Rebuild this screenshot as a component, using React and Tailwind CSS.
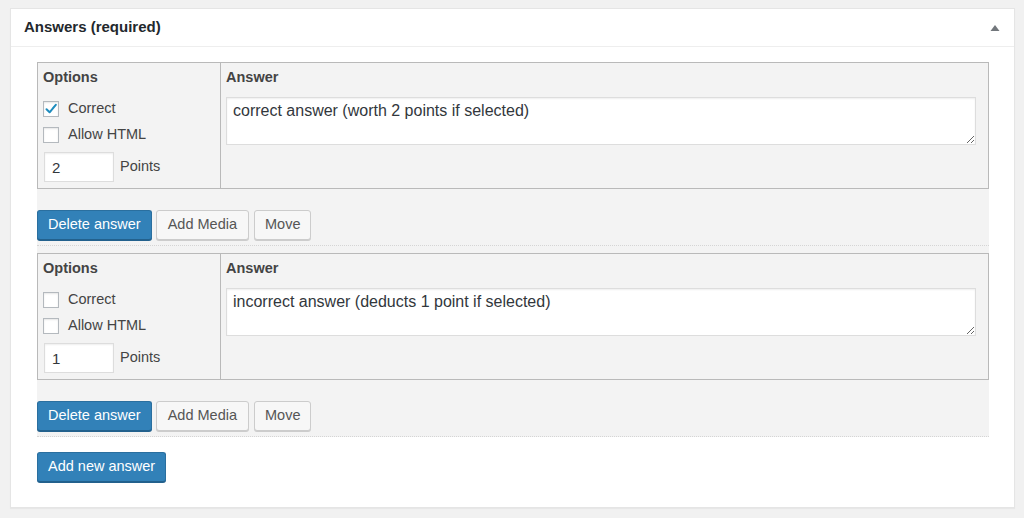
import React from "react";

const answers = [
  { correct: true, points: "2", text: "correct answer (worth 2 points if selected)" },
  { correct: false, points: "1", text: "incorrect answer (deducts 1 point if selected)" },
];

function Checkbox({ checked }) {
  return (
    <span className="w-4 h-4 border border-[#b4b9be] bg-white shadow-[inset_0_1px_2px_rgba(0,0,0,0.1)] flex items-center justify-center shrink-0">
      {checked && (
        <svg width="14" height="14" viewBox="0 0 14 14">
          <path d="M2.5 7.2 L5.6 10.3 L11.8 2.8" fill="none" stroke="#1e8cbe" strokeWidth="2" strokeLinecap="round" strokeLinejoin="round" />
        </svg>
      )}
    </span>
  );
}

function AnswerItem({ answer, first }) {
  return (
    <li className={`border-b border-dotted border-[#d5d5d5] pb-[5px] ${first ? "" : "mt-[7px]"}`}>
      <div className="flex border border-[#b9b9b9]">
        <div className="w-[183px] shrink-0 border-r border-[#b9b9b9] px-[5px] pt-[4px] pb-[6px]">
          <div className="h-5 leading-5 font-bold text-[#444]">Options</div>
          <label className="mt-[12px] h-5 flex items-center gap-[9px]">
            <Checkbox checked={answer.correct} />
            <span>Correct</span>
          </label>
          <label className="mt-[6px] h-5 flex items-center gap-[9px]">
            <Checkbox />
            <span>Allow HTML</span>
          </label>
          <div className="mt-[7px] flex items-center gap-[6px]">
            <input
              defaultValue={answer.points}
              className="ml-px w-[70px] h-[30px] border border-[#ddd] bg-white px-[7px] text-[15px] text-[#32373c] shadow-[inset_0_1px_2px_rgba(0,0,0,0.07)] outline-none"
            />
            <span>Points</span>
          </div>
        </div>
        <div className="flex-1 pl-[5px] pr-[12px] pt-[4px]">
          <div className="h-5 leading-5 font-bold text-[#444]">Answer</div>
          <textarea
            defaultValue={answer.text}
            className="mt-[10px] block w-full h-[48px] border border-[#ddd] bg-white px-[6px] py-[3px] text-[16px] leading-[20px] text-[#32373c] shadow-[inset_0_1px_2px_rgba(0,0,0,0.07)] outline-none resize-y"
          />
        </div>
      </div>
      <div className="mt-[21px] flex">
        <button className="h-[30px] px-[10px] rounded-[3px] bg-[#3281b8] border border-[#2a6f9f] border-b-[#23618d] text-white shadow-[0_1px_0_#23618d]">
          Delete answer
        </button>
        <button className="ml-[4px] h-[30px] px-[11px] rounded-[3px] bg-[#f7f7f7] border border-[#ccc] text-[#555] shadow-[0_1px_0_#ccc]">
          Add Media
        </button>
        <button className="ml-[5px] h-[30px] px-[10px] rounded-[3px] bg-[#f7f7f7] border border-[#ccc] text-[#555] shadow-[0_1px_0_#ccc]">
          Move
        </button>
      </div>
    </li>
  );
}

export default function App() {
  return (
    <div className="min-h-[518px] bg-[#f1f1f1] pt-[8px] pl-[10px] pr-[9px] font-['Liberation_Sans',Arial,sans-serif] text-[14.5px] text-[#444]">
      <div className="h-[500px] bg-white border border-[#e5e5e5] shadow-[0_1px_1px_rgba(0,0,0,0.04)]">
        <div className="h-[38px] flex items-center justify-between pl-[13px] pr-[14px] border-b border-[#eee]">
          <h2 className="font-bold text-[15px] text-[#23282d]">Answers (required)</h2>
          <svg width="10" height="8" viewBox="0 0 10 8">
            <path d="M0.5 7 L5 1 L9.5 7 Z" fill="#72777c" />
          </svg>
        </div>
        <div className="pt-[15px] pl-[26px] pr-[25px]">
          <ul className="bg-[#f3f3f3]">
            {answers.map((a, i) => (
              <AnswerItem key={i} answer={a} first={i === 0} />
            ))}
          </ul>
          <button className="mt-[15px] h-[30px] px-[10px] rounded-[3px] bg-[#3281b8] border border-[#2a6f9f] border-b-[#23618d] text-white shadow-[0_1px_0_#23618d]">
            Add new answer
          </button>
        </div>
      </div>
    </div>
  );
}
